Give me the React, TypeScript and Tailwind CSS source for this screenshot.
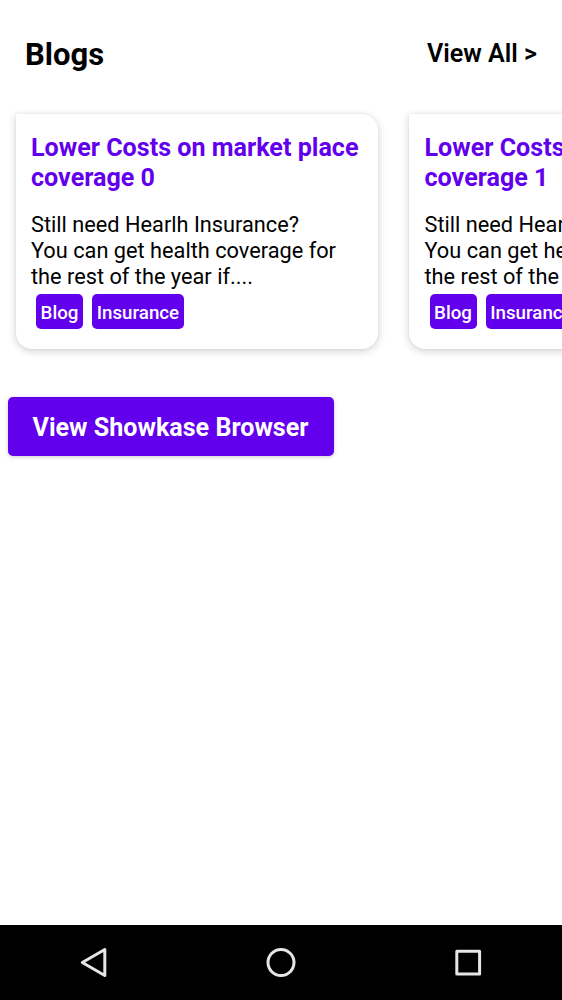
function Card({ n }: { n: number }) {
  return (
    <article className="h-[235px] w-[362.5px] shrink-0 rounded-[16px] rounded-tl-none bg-white px-[15.5px] pt-[19px] shadow-[0_2px_8px_rgba(0,0,0,0.18),0_0_2px_rgba(0,0,0,0.08)]">
      <h2 className="whitespace-nowrap text-[25.12px] font-bold leading-[30px] text-[#6200ee]">
        Lower Costs on market place
        <br />
        coverage {n}
      </h2>
      <p className="mt-[19px] whitespace-nowrap text-[21.75px] leading-[26px] text-black">
        Still need Hearlh Insurance?
        <br />
        You can get health coverage for
        <br />
        the rest of the year if....
      </p>
      <div className="mt-[4px] flex gap-[9px] pl-[5px]">
        {["Blog", "Insurance"].map((t) => (
          <span key={t} className="h-[35px] rounded-[5px] bg-[#6200ee] px-[4.6px] text-[18.75px] font-medium leading-[38px] text-white">
            {t}
          </span>
        ))}
      </div>
    </article>
  );
}

export default function App() {
  return (
    <div className="flex h-[1000px] w-[562px] flex-col overflow-hidden bg-white font-['Roboto',sans-serif]">
      <header className="flex h-[98px] shrink-0 items-center justify-between px-[25px] pt-[9px] text-black">
        <h1 className="pt-[2px] text-[31px] font-bold leading-9">Blogs</h1>
        <span className="text-[25.1px] font-semibold leading-8">View All &gt;</span>
      </header>
      <div className="flex shrink-0 gap-[31px] overflow-hidden pb-[25px] pl-[15.5px] pt-4">
        <Card n={0} />
        <Card n={1} />
      </div>
      <button className="ml-2 mt-[23px] h-[59px] w-[326px] shrink-0 rounded-[5px] bg-[#6200ee] pr-px pt-[2px] text-[25.1px] font-bold leading-[57px] text-white shadow-[0_1px_4px_rgba(0,0,0,0.2)]">
        View Showkase Browser
      </button>
      <nav className="mt-auto flex h-[75px] shrink-0 items-center justify-around bg-black">
        <svg width="32" height="32" viewBox="0 0 32 32" fill="none" stroke="#e6e6e6" strokeWidth="3" strokeLinejoin="round">
          <path d="M26.8 2.5v26L4.3 15.5Z" />
        </svg>
        <svg width="32" height="32" viewBox="0 0 32 32" fill="none" stroke="#e6e6e6" strokeWidth="3">
          <circle cx="16" cy="15.5" r="13" />
        </svg>
        <svg width="32" height="32" viewBox="0 0 32 32" fill="none" stroke="#e6e6e6" strokeWidth="3" strokeLinejoin="round">
          <path d="M4.8 4.3h22.8v22.6h-22.8Z" />
        </svg>
      </nav>
    </div>
  );
}
